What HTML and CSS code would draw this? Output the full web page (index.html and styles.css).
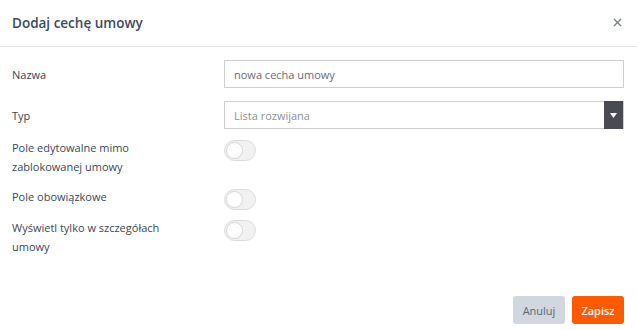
FILE: index.html
```html
<!DOCTYPE html>
<html lang="pl">

<head>
    <meta charset="UTF-8">
    <meta name="viewport" content="width=device-width, initial-scale=1.0">
    <title>Dodaj cechę umowy</title>
    <link rel="stylesheet" href="styles.css">
</head>

<body>
    <div class="modal">
        <div class="modal-header">
            <h2>Dodaj cechę umowy</h2>
            <button class="close" aria-label="Zamknij">
                <svg width="9" height="9" viewBox="0 0 9 9">
                    <path d="M1 1L8 8M8 1L1 8" stroke="#7a7f88" stroke-width="1.4" fill="none" />
                </svg>
            </button>
        </div>

        <form class="modal-body">
            <div class="row row-input">
                <label class="label">Nazwa</label>
                <input class="field" type="text" value="nowa cecha umowy">
            </div>
            <div class="row row-input row-typ">
                <label class="label">Typ</label>
                <div class="select">
                    <span class="select-text">Lista rozwijana</span>
                    <span class="select-arrow">
                        <svg width="7" height="5" viewBox="0 0 7 5">
                            <path d="M0 0H7L3.5 5Z" fill="#fff" />
                        </svg>
                    </span>
                </div>
            </div>
            <div class="row row-toggle r3">
                <label class="label">Pole edytowalne mimo<br>zablokowanej umowy</label>
                <span class="toggle"><span class="knob"></span></span>
            </div>
            <div class="row row-toggle r4">
                <label class="label">Pole obowiązkowe</label>
                <span class="toggle"><span class="knob"></span></span>
            </div>
            <div class="row row-toggle r5">
                <label class="label">Wyświetl tylko w szczegółach<br>umowy</label>
                <span class="toggle"><span class="knob"></span></span>
            </div>
        </form>

        <div class="modal-footer">
            <button class="btn btn-cancel">Anuluj</button>
            <button class="btn btn-save">Zapisz</button>
        </div>
    </div>
</body>

</html>
```

FILE: styles.css
```css
* {
    margin: 0;
    padding: 0;
    box-sizing: border-box;
}

body {
    background-color: #fff;
    font-family: "Open Sans", sans-serif;
    color: #3d4a5c;
}

.modal {
    width: 637px;
    height: 330px;
}

.modal-header {
    height: 47px;
    display: flex;
    align-items: center;
    justify-content: space-between;
    padding: 0 13px 1px 12px;
    border-bottom: 1px solid #dfe2e7;
}

.modal-header h2 {
    font-size: 13.5px;
    font-weight: 600;
    color: #3d4a5c;
}

.close {
    border: 0;
    background: none;
    width: 12px;
    height: 12px;
    display: flex;
    align-items: center;
    justify-content: center;
    margin-right: 1px;
}

/* form */
.modal-body {
    padding: 13px 13px 0 12px;
}

.row {
    display: flex;
}

.label {
    width: 212px;
    font-size: 11px;
    line-height: 19px;
    color: #3a475a;
}

.row-input {
    align-items: center;
    height: 28px;
    margin-bottom: 13px;
}

.row-typ {
    margin-bottom: 9px;
}

.field,
.select {
    flex: 1;
    height: 28px;
    border: 1px solid #cfcfcf;
    font-family: inherit;
    font-size: 11px;
    padding: 0 9px;
    color: #676c73;
    outline: none;
}

.select {
    display: flex;
    align-items: center;
    justify-content: space-between;
    padding-right: 0;
    color: #8c9096;
}

.select-arrow {
    width: 19px;
    height: 28px;
    margin-top: -1px;
    margin-bottom: -1px;
    background-color: #4a4b52;
    display: flex;
    align-items: center;
    justify-content: center;
}

.row-toggle {
    align-items: flex-start;
}

.r3 {
    margin-bottom: 11px;
}

.r4 {
    margin-bottom: 8px;
}

.toggle {
    width: 32px;
    height: 21px;
    margin-top: 2px;
    border-radius: 11px;
    border: 1px solid #dcdcdc;
    background-color: #f1f1f1;
    position: relative;
}

.knob {
    position: absolute;
    top: 1px;
    left: 1px;
    width: 17px;
    height: 17px;
    border-radius: 50%;
    background-color: #fff;
    border: 1px solid #d6d6d6;
}

/* footer */
.modal-footer {
    display: flex;
    justify-content: flex-end;
    gap: 7px;
    padding: 40px 13px 0 0;
}

.btn {
    height: 28px;
    width: 52px;
    border: 0;
    border-radius: 3px;
    font-family: inherit;
    font-size: 11px;
}

.btn-cancel {
    background-color: #d2d6de;
    color: #5b6679;
}

.btn-save {
    background-color: #ff5a00;
    color: #fff;
    font-weight: 600;
}
```
